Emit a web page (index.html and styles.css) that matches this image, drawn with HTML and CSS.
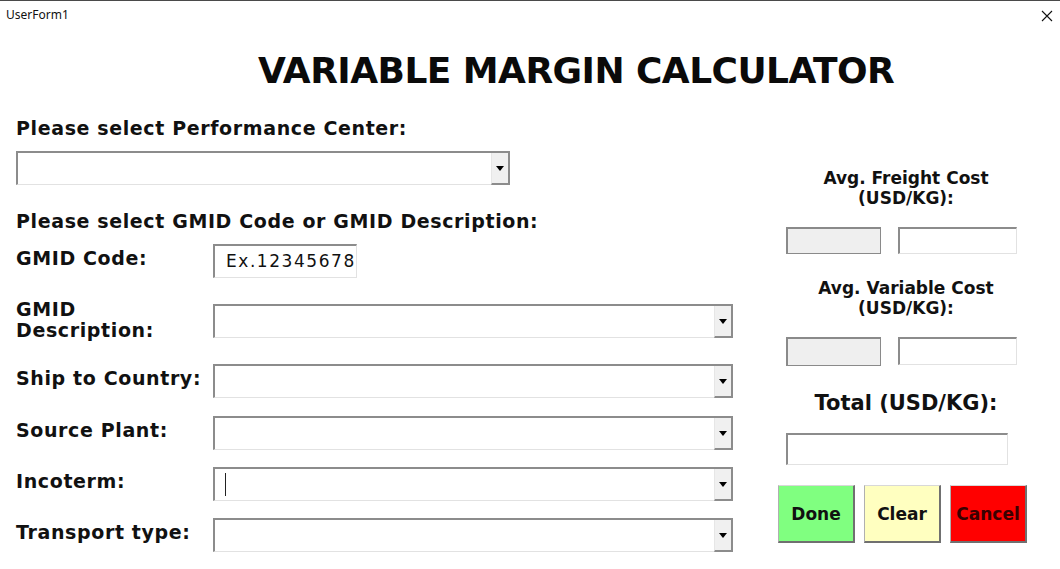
FILE: index.html
```html
<!DOCTYPE html>
<html>
<head>
<meta charset="utf-8">
<title>UserForm1</title>
<link rel="stylesheet" href="styles.css">
</head>
<body>
<div class="window">
  <div class="titlebar">
    <span class="caption">UserForm1</span>
    <svg class="close" width="12" height="12" viewBox="0 0 12 12"><path d="M1 1 L11 11 M11 1 L1 11" stroke="#111" stroke-width="1.1" fill="none"/></svg>
  </div>
  <h1 class="heading">VARIABLE MARGIN CALCULATOR</h1>
  <div class="main">
    <div class="left">
      <div class="label lbl-pc">Please select Performance Center:</div>
      <div class="combo combo-pc"><div class="field"></div><div class="drop"><span class="tri"></span></div></div>
      <div class="label lbl-gmid">Please select GMID Code or GMID Description:</div>
      <div class="form">
        <div class="row r1">
          <div class="label rl">GMID Code:</div>
          <div class="textbox code">Ex.12345678</div>
        </div>
        <div class="row r2">
          <div class="label rl two">GMID<br>Description:</div>
          <div class="combo wide"><div class="field"></div><div class="drop"><span class="tri"></span></div></div>
        </div>
        <div class="row r3">
          <div class="label rl">Ship to Country:</div>
          <div class="combo wide"><div class="field"></div><div class="drop"><span class="tri"></span></div></div>
        </div>
        <div class="row r4">
          <div class="label rl">Source Plant:</div>
          <div class="combo wide"><div class="field"></div><div class="drop"><span class="tri"></span></div></div>
        </div>
        <div class="row r5">
          <div class="label rl">Incoterm:</div>
          <div class="combo wide"><div class="field"><span class="caret"></span></div><div class="drop"><span class="tri"></span></div></div>
        </div>
        <div class="row r6">
          <div class="label rl">Transport type:</div>
          <div class="combo wide"><div class="field"></div><div class="drop"><span class="tri"></span></div></div>
        </div>
      </div>
    </div>
    <div class="right">
      <div class="rlabel">Avg. Freight Cost<br>(USD/KG):</div>
      <div class="pair p1">
        <div class="box grey"></div>
        <div class="box white"></div>
      </div>
      <div class="rlabel rl2">Avg. Variable Cost<br>(USD/KG):</div>
      <div class="pair p2">
        <div class="box grey tall"></div>
        <div class="box white mid"></div>
      </div>
      <div class="total-label">Total (USD/KG):</div>
      <div class="box white total"></div>
      <div class="buttons">
        <div class="btn done">Done</div>
        <div class="btn clear">Clear</div>
        <div class="btn cancel">Cancel</div>
      </div>
    </div>
  </div>
</div>
</body>
</html>
```
FILE: styles.css
```css
* { box-sizing: border-box; }
html, body { margin: 0; padding: 0; background: #fff; }
body { width: 1060px; height: 569px; overflow: hidden; font-family: "DejaVu Sans", Verdana, sans-serif; color: #111; }

.window { border-top: 1px solid #4a4a4a; height: 569px; }

.titlebar { height: 29px; display: flex; align-items: center; justify-content: space-between; padding: 0 7px 0 6px; }
.caption { font-family: "Noto Sans", "Open Sans", sans-serif; font-size: 12px; color: #111; margin-top: -2px; }

.heading { margin: 21px 0 0 0; padding-left: 258px; font-size: 36px; line-height: 40px; font-weight: bold; letter-spacing: -0.55px; color: #0a0a0a; }

.main { display: flex; }
.left { width: 778px; padding-left: 16px; }
.label { font-weight: bold; font-size: 19px; line-height: 22px; letter-spacing: 0.62px; color: #111; white-space: nowrap; }
.lbl-pc { margin-top: 26px; }
.lbl-gmid { margin-top: 25px; }

.combo { display: flex; height: 34px; border-top: 2px solid #8c8c8c; border-left: 2px solid #8c8c8c; border-bottom: 1px solid #e2e2e2; border-right: 0; background: #fff; }
.combo .field { flex: 1; position: relative; }
.combo .drop { width: 19px; background: #f0f0f0; border-right: 2px solid #8c8c8c; border-bottom: 2px solid #8c8c8c; border-left: 1px solid #e6e6e6; display: flex; align-items: center; justify-content: center; margin-bottom: -1px; }
.tri { width: 0; height: 0; border-left: 4px solid transparent; border-right: 4px solid transparent; border-top: 5px solid #000; }
.combo-pc { width: 494px; margin-top: 12px; }
.wide { width: 520px; }
.caret { position: absolute; left: 10px; top: 4px; height: 23px; border-left: 1px solid #222; }

.form { margin-top: 12px; }
.row { display: flex; align-items: flex-start; }
.rl { width: 197px; padding-top: 3px; }
.r1 { height: 60px; }
.r2 { height: 60px; }
.r3 { height: 52px; }
.r4 { height: 51px; }
.r5 { height: 51px; }
.r6 { height: 34px; }
.two { line-height: 21px; margin-top: -5px; padding-top: 0; }

.textbox { height: 34px; border-top: 2px solid #8c8c8c; border-left: 2px solid #8c8c8c; border-bottom: 1px solid #e2e2e2; border-right: 1px solid #e2e2e2; background: #fff; }
.code { width: 144px; font-size: 17px; line-height: 30px; padding-left: 11px; letter-spacing: 1.55px; color: #111; white-space: nowrap; overflow: hidden; }

.right { width: 256px; display: flex; flex-direction: column; align-items: flex-start; }
.rlabel { width: 256px; text-align: center; font-weight: bold; font-size: 17px; line-height: 20px; margin-top: 77px; color: #111; }
.rl2 { margin-top: 24px; }
.pair { display: flex; gap: 17px; margin-left: 8px; }
.p1 { margin-top: 19px; }
.p2 { margin-top: 19px; }
.box { height: 27px; }
.grey { width: 95px; background: #efefef; border: 1px solid #8a8a8a; border-top-width: 2px; border-left-width: 2px; }
.white { width: 119px; background: #fff; border-top: 2px solid #8c8c8c; border-left: 2px solid #8c8c8c; border-bottom: 1px solid #e2e2e2; border-right: 1px solid #e2e2e2; }
.tall { height: 29px; }
.mid { height: 28px; }
.total-label { width: 256px; text-align: center; font-weight: bold; font-size: 21px; line-height: 24px; margin-top: 25px; color: #111; }
.total { width: 222px; height: 32px; margin-left: 8px; margin-top: 18px; }

.buttons { display: flex; gap: 9px; margin-top: 20px; }
.btn { width: 77px; height: 58px; display: flex; align-items: center; justify-content: center; font-weight: bold; font-size: 17px; border-top: 1px solid #d8d8d8; border-left: 1px solid #b0b0b0; border-right: 2px solid #707070; border-bottom: 2px solid #707070; }
.done { background: #80ff80; color: #111; }
.clear { background: #ffffc0; color: #111; }
.cancel { background: #ff0000; color: #3a0000; }
```
